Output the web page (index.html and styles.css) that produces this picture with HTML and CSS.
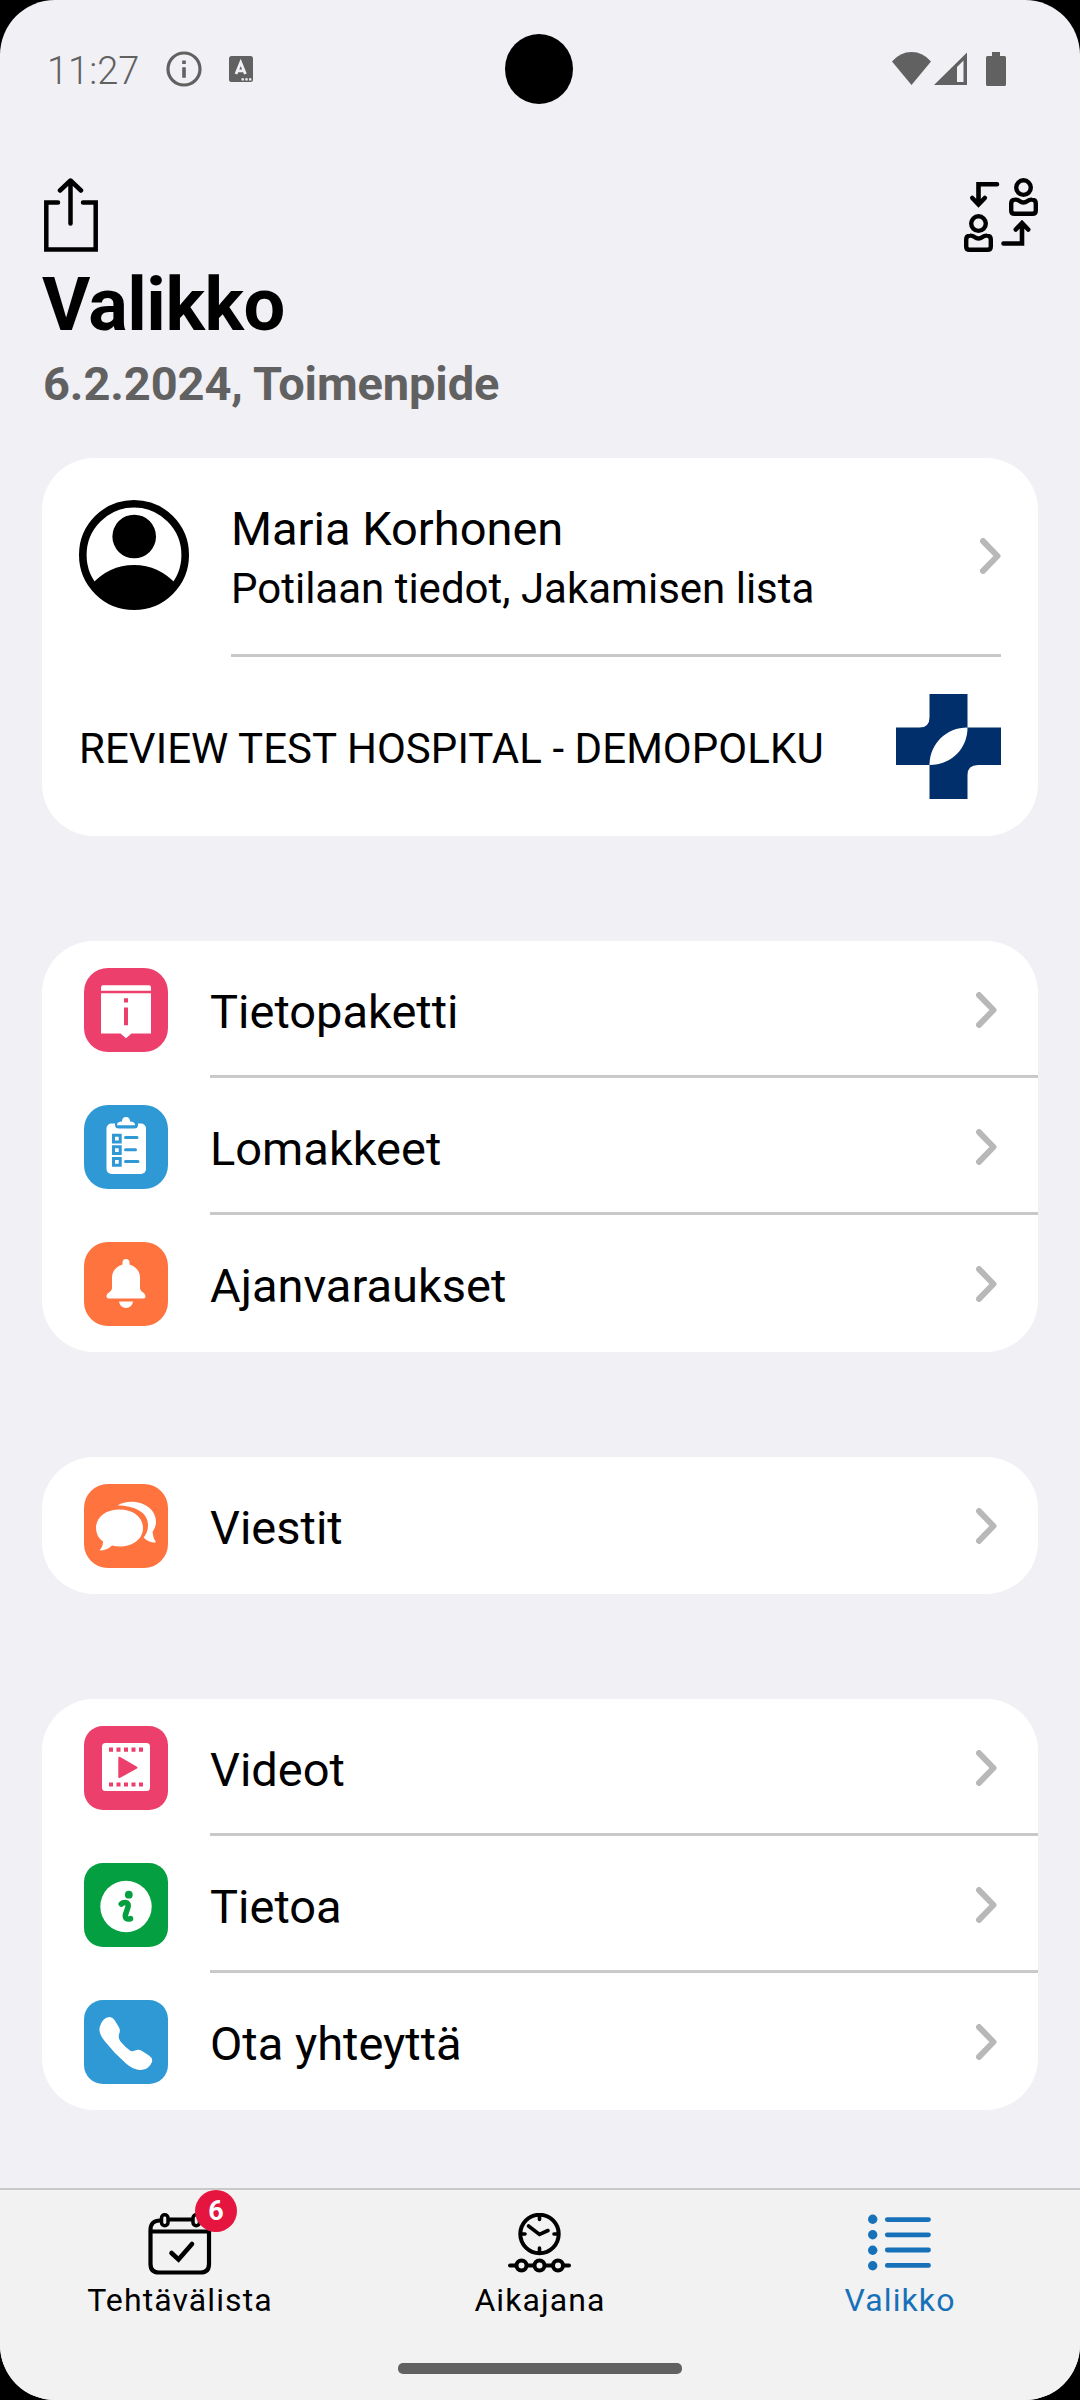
FILE: index.html
```html
<!DOCTYPE html>
<html lang="fi">
<head>
<meta charset="utf-8">
<title>Valikko</title>
<link rel="stylesheet" href="styles.css">
</head>
<body>
<svg class="defs" width="0" height="0" aria-hidden="true">
  <symbol id="chevron" viewBox="0 0 22 36"><path d="M4 3.100L18.500 18L4 32.900" fill="none" stroke="#b8b8b8" stroke-width="6" stroke-linecap="round" stroke-linejoin="round"/></symbol>
  <symbol id="person" viewBox="0 0 29 38"><g fill="none" stroke="#000" stroke-width="4.4" stroke-linejoin="round"><circle cx="14.5" cy="9.6" r="7.3"/><path d="M2.2 25.5Q2.2 21.6 6 21.6Q8.500 21.400 10.500 23Q14.500 26 18.500 23Q20.500 21.400 23 21.600Q26.800 21.600 26.800 25.500V32.500Q26.800 35.800 23.500 35.800H5.500Q2.200 35.800 2.200 32.500Z"/></g></symbol>
</svg>
<div class="screen">
  <header class="status">
    <div class="status-side">
      <span class="time">11:27</span>
      <svg class="st-info" width="36" height="36" viewBox="0 0 36 36"><circle cx="18" cy="18" r="16" fill="none" stroke="#616161" stroke-width="3.200"/><path d="M16.200 9.500h3.600v3.600h-3.600zM16.200 16.300h3.600v10.500h-3.600z" fill="#616161"/></svg>
      <svg class="st-a" width="24" height="26" viewBox="0 0 24 26"><rect width="24" height="26" rx="2.500" fill="#616161"/><path d="M7 18L11.700 6.500L16.400 18M8.800 14.800H14.600" fill="none" stroke="#f0f0f5" stroke-width="2.800"/><path d="M12.500 22.200h2.400v2.400h-2.400zM16.300 22.200h2.400v2.400h-2.400zM20 22.200h2.400v2.400h-2.400z" fill="#f0f0f5"/></svg>
    </div>
    <div class="camera"></div>
    <div class="status-side status-right">
      <svg width="115" height="36" viewBox="0 0 115 36" fill="#616161"><path d="M0 10.500Q8 1 19.500 1T39 10.500L19.500 34Z"/><path fill-rule="evenodd" d="M42 34L75 1.500V34ZM65 16V31H71.500V9.500Z"/><path d="M100 1h8v4h4.500q1.500 0 1.500 1.500v27q0 1.500-1.500 1.500h-17q-1.500 0-1.500-1.500v-27q0-1.500 1.500-1.500h4.500z"/></svg>
    </div>
  </header>

  <main class="content">
    <div class="toolbar">
      <svg width="58" height="76" viewBox="0 0 58 76" fill="none" stroke="#000" stroke-width="4.500" stroke-linecap="round"><path d="M16 24.500H4.300V71.500H53.700V24.500H41" /><path d="M28.500 3V45.500M18 12.500L28.500 2.500L39 12.500" stroke-linejoin="round"/></svg>
      <svg class="transfer" width="75" height="75" viewBox="0 0 75 75" fill="none"><use href="#person" x="45" y="0" width="29" height="38"/><use href="#person" x="0" y="36" width="29" height="38"/><g stroke="#000" stroke-width="4.600" stroke-linecap="round"><path d="M33 6.200H14.500V26M8.300 20L14.500 26.500L20.800 20"/><path d="M39.500 65.500H58V45.500M51.800 51.500L58 45L64.200 51.500"/></g></svg>
    </div>
    <h1 class="title">Valikko</h1>
    <p class="subtitle">6.2.2024, Toimenpide</p>

    <section class="card profile">
      <div class="profile-row">
        <svg width="110" height="110" viewBox="0 0 110 110"><circle cx="55" cy="55" r="51.200" fill="none" stroke="#000" stroke-width="7.600"/><circle cx="55.200" cy="36.500" r="21.800"/><path d="M12 85Q30 65 55 65T98 85Q80 108 55 108T12 85Z"/></svg>
        <div class="profile-main">
          <div class="profile-text">
            <div class="name">Maria Korhonen</div>
            <div class="desc">Potilaan tiedot, Jakamisen lista</div>
          </div>
          <svg class="chev" width="22" height="36"><use href="#chevron"/></svg>
        </div>
      </div>
      <div class="hospital-row">
        <span class="hospital">REVIEW TEST HOSPITAL - DEMOPOLKU</span>
        <svg width="105" height="105" viewBox="0 0 105 105"><path d="M33.500 0H71.500V33.500H105V71H82Q71.500 71 71.500 81V105H33.500V71H0V33.500H23.500Q33.500 33.500 33.500 23.500Z" fill="#002f6c"/><path d="M33.500 71C33.500 50 50 33.500 71.500 33.500C71.500 55 55 71 33.500 71Z" fill="#fff"/></svg>
      </div>
    </section>

    <section class="card menu">
      <div class="row">
        <div class="tile pink"><svg width="84" height="84" viewBox="0 0 84 84"><path d="M17 22.800V19.500Q17 17.300 19 17.300H65Q67 17.300 67 19.500V22.800ZM17 25.200H67V65.500H47.500L42 70.300L36.500 65.500H17Z" fill="#fff"/><path d="M40 30.300h4v4.200h-4zM40 39.500h4v17.800h-4z" fill="#ec3f6b"/></svg></div>
        <div class="row-main"><span>Tietopaketti</span><svg class="chev" width="22" height="36"><use href="#chevron"/></svg></div>
      </div>
      <div class="row">
        <div class="tile blue"><svg width="84" height="84" viewBox="0 0 84 84"><rect x="22.500" y="18.500" width="39.500" height="50.500" rx="5" fill="#fff"/><path d="M31 17H54V20Q54 23.500 50 23.500H35Q31 23.500 31 20Z" fill="#2f99d5"/><path d="M33 20.200Q33 16.500 38 16.500Q38 12 42 12T46 16.500Q51 16.500 51 20.200Z" fill="#fff"/><g fill="none" stroke="#2f99d5" stroke-width="3"><path d="M29.500 30.200h6.700v6.700h-6.700zM29.500 41.800h6.700v6.700h-6.700zM29.500 53.500h6.700v6.700h-6.700z"/><path stroke-linecap="round" d="M41.500 32.500H53M41.500 44.700H51.500M41.500 56.500H54"/></g></svg></div>
        <div class="row-main"><span>Lomakkeet</span><svg class="chev" width="22" height="36"><use href="#chevron"/></svg></div>
      </div>
      <div class="row">
        <div class="tile orange"><svg width="84" height="84" viewBox="0 0 84 84" fill="#fff"><path d="M38.500 22.500V20.500Q38.500 17 42 17T45.500 20.500V22.500C52 24.500 56 29 56 36V46C56 50 61.500 50.500 61.500 54.500Q61.500 56.500 59.500 56.500H24.500Q22.500 56.500 22.500 54.500C22.500 50.500 28 50 28 46V36C28 29 32 24.500 38.500 22.500ZM35 59.500H49Q48 66 42 66T35 59.500Z"/></svg></div>
        <div class="row-main"><span>Ajanvaraukset</span><svg class="chev" width="22" height="36"><use href="#chevron"/></svg></div>
      </div>
    </section>

    <section class="card menu">
      <div class="row">
        <div class="tile orange"><svg width="84" height="84" viewBox="0 0 84 84" fill="#fff"><path d="M35.500 25.500C49 25.500 59 33 59 44S49 62.500 35.500 62.500Q31.500 62.500 28 61.500Q23 66.500 15.500 66.500Q19 62.500 19 57.500Q12 52.500 12 44C12 33 22 25.500 35.500 25.500Z"/><path d="M33.500 21.500C47 13 72 19.500 72 38Q72 43 68.500 48Q69 54 72 58.500Q65 59 59.500 53.500Q64 48.500 64 41C64 28 50 21.500 33.500 21.500Z"/></svg></div>
        <div class="row-main"><span>Viestit</span><svg class="chev" width="22" height="36"><use href="#chevron"/></svg></div>
      </div>
    </section>

    <section class="card menu">
      <div class="row">
        <div class="tile pink small"><svg width="84" height="84" viewBox="0 0 84 84"><rect x="18" y="17" width="48" height="48" rx="3.500" fill="#fff"/><path d="M25 23.700H59.500M25 58.500H59.500" stroke="#ec3f6b" stroke-width="4.200" stroke-dasharray="4 3.500" fill="none"/><path d="M35.300 31.700L52.500 41.500L35.300 51Z" fill="#ec3f6b" stroke="#ec3f6b" stroke-width="2" stroke-linejoin="round"/></svg></div>
        <div class="row-main"><span>Videot</span><svg class="chev" width="22" height="36"><use href="#chevron"/></svg></div>
      </div>
      <div class="row">
        <div class="tile green small"><svg width="84" height="84" viewBox="0 0 84 84"><circle cx="42" cy="43.500" r="25.700" fill="#fff"/><circle cx="44.800" cy="31.700" r="3.900" fill="#039f41"/><path d="M37.300 41Q39 39.300 41.500 39.500Q45.300 40 43.700 45L41.500 51.500Q40.500 57 46.500 55.700" fill="none" stroke="#039f41" stroke-width="5.600" stroke-linecap="round"/></svg></div>
        <div class="row-main"><span>Tietoa</span><svg class="chev" width="22" height="36"><use href="#chevron"/></svg></div>
      </div>
      <div class="row">
        <div class="tile blue small"><svg width="84" height="84" viewBox="0 0 84 84"><path d="M25.500 17Q28.500 17 30.500 20L34.500 26.500Q36.500 29.500 35.500 33Q33.500 37.500 36.500 41.500Q41 47 46 50.500Q48 52 51 50.500Q54.500 49 58 51L65 55.500Q69 58 68 62Q65 69.500 57 70Q50 70.500 42 63.500Q30 53 21 41.500Q14 33 15.800 27Q18.500 17.500 25.500 17Z" fill="#fff"/></svg></div>
        <div class="row-main"><span>Ota yhteyttä</span><svg class="chev" width="22" height="36"><use href="#chevron"/></svg></div>
      </div>
    </section>
  </main>

  <nav class="tabs">
    <div class="tab">
      <div class="tab-icon">
        <svg width="64" height="64" viewBox="0 0 64 64" fill="none" stroke="#000" stroke-width="4.200"><path d="M12 7.500Q2.500 7.500 2.500 17V51Q2.500 59.500 11 59.500H52.500Q61 59.500 61 51V17Q61 7.500 51.500 7.500M20 6.500H44M2.500 18.500H61"/><rect x="13.500" y="1.800" width="6.500" height="11" rx="3.200" stroke-width="3.500"/><rect x="45" y="1.800" width="6.500" height="11" rx="3.200" stroke-width="3.500"/><path d="M23.500 40L30.500 46.500L44 31" stroke-linecap="round" stroke-width="4.600"/></svg>
        <span class="badge">6</span>
      </div>
      <span class="tab-label">Tehtävälista</span>
    </div>
    <div class="tab">
      <div class="tab-icon">
        <svg width="64" height="64" viewBox="0 0 64 64" fill="none" stroke="#000" stroke-width="4"><circle cx="31.500" cy="21" r="19.200"/><path d="M31.500 3V6.500M31.500 35V39M13.500 21H17M46 21H50M20.500 13L31.500 21.500L40 17.500" stroke-linecap="round" stroke-width="3.600"/><path d="M2 52.500H8M20 52.500H26M38 52.500H44M56 52.500H61" stroke-linecap="round"/><circle cx="13.500" cy="52.500" r="5"/><circle cx="31.500" cy="52.500" r="5"/><circle cx="50" cy="52.500" r="5"/></svg>
      </div>
      <span class="tab-label">Aikajana</span>
    </div>
    <div class="tab active">
      <div class="tab-icon">
        <svg width="64" height="64" viewBox="0 0 64 64" fill="#1771b9"><circle cx="4.700" cy="6.300" r="4.700"/><circle cx="4.700" cy="21.700" r="4.700"/><circle cx="4.700" cy="37.300" r="4.700"/><circle cx="4.700" cy="52.700" r="4.700"/><path d="M19.300 6.600H60.500M19.300 21.800H60.500M19.300 37H60.500M19.300 52.400H60.500" stroke="#1771b9" stroke-width="4.800" stroke-linecap="round"/></svg>
      </div>
      <span class="tab-label">Valikko</span>
    </div>
  </nav>
  <footer class="gesture"><div class="handle"></div></footer>
</div>
</body>
</html>
```
FILE: styles.css
```css
* { box-sizing: border-box; }
html, body { margin: 0; background: #000; }
body { font-family: Roboto, "Liberation Sans", sans-serif; color: #000; }
svg { display: block; flex: none; }
.defs { display: none; }
.screen { width: 1080px; height: 2400px; display: flex; flex-direction: column; background: #f0f0f5; border-radius: 55px; overflow: hidden; }

.status { height: 138px; flex: none; display: flex; justify-content: space-between; align-items: center; padding: 0 73px 0 47px; }
.status-side { width: 430px; display: flex; align-items: center; }
.status-right { justify-content: flex-end; }
.time { width: 119px; padding-top: 3px; font-size: 38px; line-height: 44px; font-weight: 300; color: #616161; }
.st-a { margin-left: 27px; }
.camera { width: 68px; height: 70px; border-radius: 50%; background: #000; margin-left: 24px; flex: none; }

.content { flex: 1; min-height: 0; padding: 40px 42px 0; }
.toolbar { display: flex; justify-content: space-between; height: 78px; }
.transfer { margin-right: -1px; }
.title { margin: 5px 0 0; font-size: 74px; line-height: 88px; font-weight: 700; letter-spacing: -0.5px; }
.subtitle { margin: 7px 0 0 1px; font-size: 47px; line-height: 56px; font-weight: 700; letter-spacing: -0.1px; color: #616161; }

.card { background: #fff; border-radius: 52px; overflow: hidden; margin-bottom: 105px; }
.card:last-child { margin-bottom: 0; }
.profile { height: 378px; margin-top: 46px; padding: 0 37px; }
.profile-row { display: flex; gap: 42px; height: 199px; }
.profile-row > svg { margin-top: 42px; }
.profile-main { flex: 1; display: flex; justify-content: space-between; border-bottom: 3px solid #c9c9c9; }
.profile-main .chev { margin-top: 80px; }
.profile-text { padding-top: 41px; }
.name { font-size: 47px; line-height: 60px; }
.desc { font-size: 42px; line-height: 60px; }
.hospital-row { display: flex; justify-content: space-between; align-items: center; height: 179px; }
.hospital { padding-top: 4px; font-size: 42px; letter-spacing: 0.06px; }

.row { display: flex; height: 137px; padding-left: 42px; gap: 42px; }
.tile { width: 84px; height: 84px; margin-top: 27px; border-radius: 24px; flex: none; }
.tile.small { border-radius: 19px; }
.pink { background: #ec3f6b; }
.blue { background: #2f99d5; }
.orange { background: #ff733e; }
.green { background: #039f41; }
.row-main { flex: 1; display: flex; justify-content: space-between; align-items: center; padding: 3px 41px 0 0; border-bottom: 3px solid #c9c9c9; font-size: 47px; }
.row-main span { padding-top: 3px; }
.row:last-child .row-main { border-bottom-color: transparent; }

.tabs { height: 152px; flex: none; display: flex; padding-top: 23px; background: #f2f2f2; border-top: 2px solid #c9c9c9; }
.tab { flex: 1; display: flex; flex-direction: column; align-items: center; gap: 4px; }
.tab-icon { position: relative; height: 64px; }
.tab-label { font-size: 32px; line-height: 38px; letter-spacing: 1.1px; }
.active { color: #1771b9; }
.badge { position: absolute; left: 47px; top: -23px; width: 42px; height: 42px; border-radius: 50%; background: #e61540; color: #fff; font-size: 27px; font-weight: 700; line-height: 43px; text-align: center; }
.gesture { height: 60px; flex: none; display: flex; justify-content: center; align-items: flex-start; padding-top: 23px; background: #f2f2f2; }
.handle { width: 284px; height: 11px; border-radius: 5px; background: #616161; }
```
